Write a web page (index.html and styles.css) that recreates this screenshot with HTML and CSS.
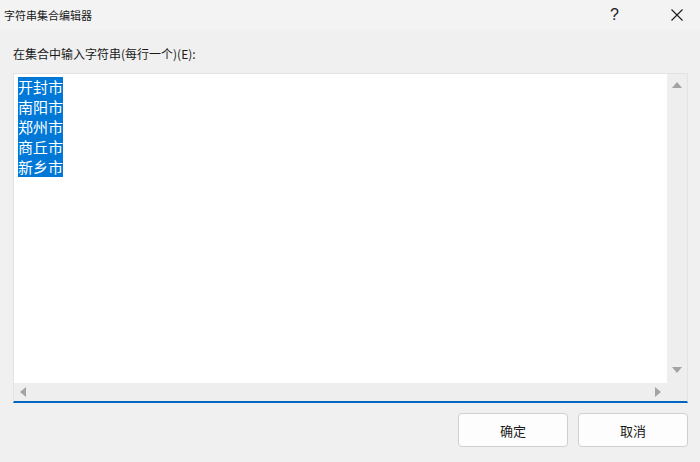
FILE: index.html
```html
<!DOCTYPE html>
<html lang="zh-CN">
<head>
    <meta charset="UTF-8">
    <meta name="viewport" content="width=device-width, initial-scale=1.0">
    <title>字符串集合编辑器</title>
    <link rel="stylesheet" href="styles.css">
</head>
<body>
    <div class="titlebar">
        <span class="title">字符串集合编辑器</span>
        <span class="help">?</span>
        <span class="close">
            <svg width="12" height="12" viewBox="0 0 12 12"><path d="M0.5 0.5L11.5 11.5M11.5 0.5L0.5 11.5" stroke="#1a1a1a" stroke-width="1.1" fill="none"/></svg>
        </span>
    </div>

    <div class="content">
        <label class="prompt" for="lines">在集合中输入字符串(每行一个)(E):</label>
        <div class="editor">
            <div class="editor-main">
                <div class="text-area" id="lines">
                    <div class="selection">
                        <div>开封市</div>
                        <div>南阳市</div>
                        <div>郑州市</div>
                        <div>商丘市</div>
                        <div>新乡市</div>
                    </div>
                </div>
                <div class="vscroll">
                    <span class="arrow up"></span>
                    <span class="arrow down"></span>
                </div>
            </div>
            <div class="hscroll">
                <span class="arrow left"></span>
                <span class="arrow right"></span>
                <span class="corner"></span>
            </div>
        </div>

        <div class="buttons">
            <button class="btn">确定</button>
            <button class="btn">取消</button>
        </div>
    </div>
</body>
</html>
```

FILE: styles.css
```css
body {
    margin: 0;
    width: 700px;
    height: 462px;
    background: #f0f0f0;
    font-family: "Noto Sans CJK SC", "Noto Sans", sans-serif;
    color: #1a1a1a;
    overflow: hidden;
}
.titlebar {
    height: 30px;
    background: #f3f3f3;
    display: flex;
    align-items: center;
}
.title {
    margin-left: 4px;
    font-size: 11px;
    flex: 1;
}
.help {
    font-family: "Liberation Sans", sans-serif;
    font-size: 16px;
    width: 12px;
    margin-right: 49px;
}
.close {
    display: flex;
    width: 12px;
    height: 12px;
    margin-right: 17px;
}
.content {
    padding: 15px 12px 0 13px;
}
.prompt {
    display: block;
    font-size: 12px;
    line-height: 18px;
    height: 28px;
}
.editor {
    border: 1px solid #e3e3e3;
    border-bottom: 2px solid #0067c0;
    background: #ffffff;
    height: 327px;
    display: flex;
    flex-direction: column;
}
.editor-main {
    flex: 1;
    display: flex;
}
.text-area {
    flex: 1;
    padding: 3px 4px;
}
.selection {
    width: fit-content;
    background: #0078d7;
    color: #ffffff;
    font-size: 15px;
    line-height: 20px;
}
.vscroll {
    width: 20px;
    background: #eeeeee;
    display: flex;
    flex-direction: column;
    justify-content: space-between;
    align-items: center;
    padding: 8px 0 10px;
}
.hscroll {
    height: 18px;
    background: #eeeeee;
    display: flex;
    align-items: center;
    padding-left: 6px;
}
.arrow {
    width: 0;
    height: 0;
    border-style: solid;
    border-color: transparent;
}
.up {
    border-width: 0 5px 6px 5px;
    border-bottom-color: #a3a3a3;
}
.down {
    border-width: 6px 5px 0 5px;
    border-top-color: #a3a3a3;
}
.left {
    border-width: 5px 6px 5px 0;
    border-right-color: #a3a3a3;
}
.right {
    border-width: 5px 0 5px 6px;
    border-left-color: #a3a3a3;
    margin-left: auto;
}
.corner {
    width: 26px;
}
.buttons {
    display: flex;
    justify-content: flex-end;
    gap: 10px;
    margin-top: 10px;
}
.btn {
    width: 110px;
    height: 34px;
    background: #fdfdfd;
    border: 1px solid #d0d0d0;
    border-radius: 4px;
    font-family: "Noto Sans CJK SC", "Noto Sans", sans-serif;
    font-size: 13px;
    color: #1a1a1a;
    padding: 0;
}
```
